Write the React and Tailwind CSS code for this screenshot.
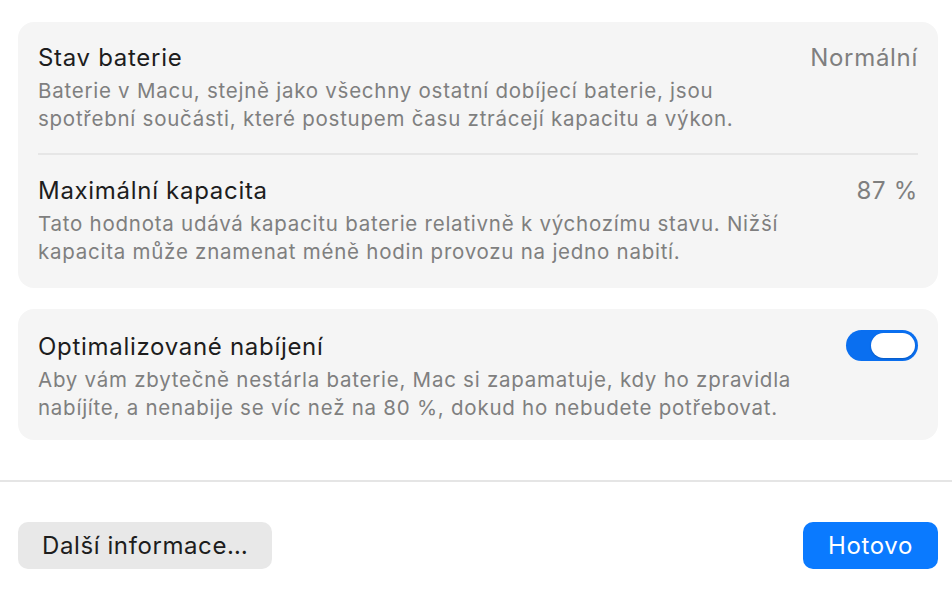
import React, { useState } from 'react';

const font = { fontFamily: 'Inter, "Noto Sans", sans-serif' };

const Row = ({ title, value, children, right }) => (
    <div className="flex items-start justify-between">
        <div className="flex-1">
            <div className="text-[24px] leading-[30px] tracking-[0.7px] text-[#1d1d1d]">{title}</div>
            <div className="text-[20.5px] leading-[28px] tracking-[0.75px] text-[#7f7f7f] mt-[4px]">{children}</div>
        </div>
        {value && <div className="text-[24px] leading-[30px] tracking-[0.7px] text-[#7f7f7f]">{value}</div>}
        {right}
    </div>
);

const Toggle = ({ on, onChange }) => (
    <button
        onClick={() => onChange(!on)}
        className={`-mt-[2px] flex w-[72px] h-[31px] items-center rounded-full p-[3px] ${on ? 'bg-[#0a6ff0] justify-end' : 'bg-[#dcdcdc] justify-start'}`}
    >
        <span className="block w-[44px] h-[25px] rounded-full bg-white shadow-[0_1px_2px_rgba(0,0,0,0.2)]" />
    </button>
);

export default function App() {
    const [optimized, setOptimized] = useState(true);

    return (
        <div className="w-[952px] h-[594px] bg-white overflow-hidden" style={font}>
            <div className="pl-[18px] pr-[14px] pt-[22px]">
                {/* Battery health card */}
                <div className="bg-[#f5f5f5] rounded-[16px] px-[20px] pt-[21px] pb-[22px]">
                    <Row title="Stav baterie" value="Normální">
                        Baterie v Macu, stejně jako všechny ostatní dobíjecí baterie, jsou<br />
                        spotřební součásti, které postupem času ztrácejí kapacitu a výkon.
                    </Row>
                    <div className="h-[2px] bg-[#e6e6e6] mt-[20px] mb-[21px]" />
                    <Row title="Maximální kapacita" value="87 %">
                        Tato hodnota udává kapacitu baterie relativně k výchozímu stavu. Nižší<br />
                        kapacita může znamenat méně hodin provozu na jedno nabití.
                    </Row>
                </div>

                {/* Optimized charging card */}
                <div className="bg-[#f5f5f5] rounded-[16px] px-[20px] pt-[23px] pb-[18px] mt-[21px]">
                    <Row title="Optimalizované nabíjení" right={<Toggle on={optimized} onChange={setOptimized} />}>
                        Aby vám zbytečně nestárla baterie, Mac si zapamatuje, kdy ho zpravidla<br />
                        nabíjíte, a nenabije se víc než na 80 %, dokud ho nebudete potřebovat.
                    </Row>
                </div>
            </div>

            <div className="h-[2px] bg-[#e5e5e5] mt-[40px]" />

            <div className="flex justify-between pl-[18px] pr-[14px] pt-[40px]">
                <button className="h-[47px] px-[24px] rounded-[10px] bg-[#e8e8e8] text-[24px] tracking-[0.6px] text-[#1d1d1d]">
                    Další informace…
                </button>
                <button className="h-[47px] w-[135px] rounded-[10px] bg-[#0a7aff] text-[24px] tracking-[0.6px] text-white">
                    Hotovo
                </button>
            </div>
        </div>
    );
}
